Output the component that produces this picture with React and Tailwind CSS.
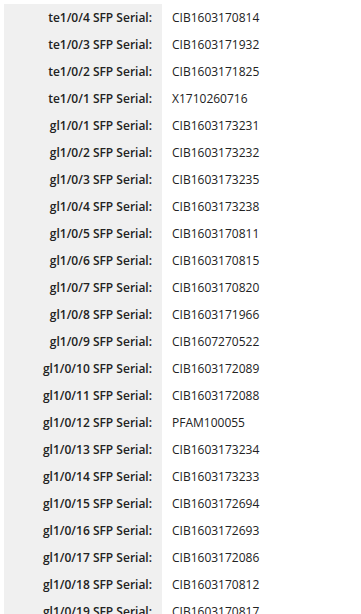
const rows = [
  ["te1/0/4", "CIB1603170814"],
  ["te1/0/3", "CIB1603171932"],
  ["te1/0/2", "CIB1603171825"],
  ["te1/0/1", "X1710260716"],
  ["gl1/0/1", "CIB1603173231"],
  ["gl1/0/2", "CIB1603173232"],
  ["gl1/0/3", "CIB1603173235"],
  ["gl1/0/4", "CIB1603173238"],
  ["gl1/0/5", "CIB1603170811"],
  ["gl1/0/6", "CIB1603170815"],
  ["gl1/0/7", "CIB1603170820"],
  ["gl1/0/8", "CIB1603171966"],
  ["gl1/0/9", "CIB1607270522"],
  ["gl1/0/10", "CIB1603172089"],
  ["gl1/0/11", "CIB1603172088"],
  ["gl1/0/12", "PFAM100055"],
  ["gl1/0/13", "CIB1603173234"],
  ["gl1/0/14", "CIB1603173233"],
  ["gl1/0/15", "CIB1603172694"],
  ["gl1/0/16", "CIB1603172693"],
  ["gl1/0/17", "CIB1603172086"],
  ["gl1/0/18", "CIB1603170812"],
  ["gl1/0/19", "CIB1603170817"],
];

export default function App() {
  return (
    <div className="h-[614px] overflow-hidden bg-white pl-[4px] text-[#222] text-[12px]" style={{ fontFamily: '"Open Sans", sans-serif' }}>
      <div className="grid grid-cols-[158px_1fr] pt-[4px]">
        {rows.map(([port, serial]) => (
          <div key={port} className="contents">
            <div className="bg-[#f0f0f0] h-[27px] flex items-center justify-end pr-[10px] font-semibold">
              {port} SFP Serial:
            </div>
            <div className="h-[27px] flex items-center pl-[10px]">{serial}</div>
          </div>
        ))}
      </div>
    </div>
  );
}
